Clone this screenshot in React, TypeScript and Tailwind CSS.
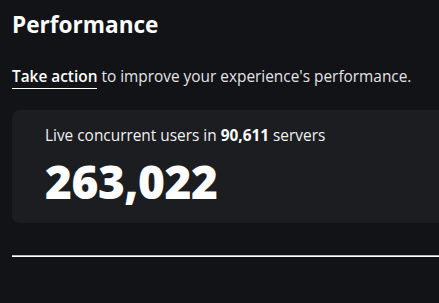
export default function App() {
  return (
    <div
      className="w-[439px] h-[303px] overflow-hidden bg-[#121317] text-white"
      style={{ fontFamily: '"Open Sans", "Noto Sans", sans-serif' }}
    >
      <div className="pl-3 pt-[10px] w-[480px]">
        <h1 className="text-[22.6px] leading-[30px] font-bold">Performance</h1>

        <p className="mt-[26px] text-[15.4px] leading-[22px] text-[#e4e4e6]">
          <span className="font-semibold text-white border-b-[1.5px] border-white pb-[1px]">Take action</span> to
          improve your experience's performance.
        </p>

        <div className="mt-[22px] w-[470px] h-[113px] rounded-lg bg-[#1c1d21] pl-[33px] pt-[15px]">
          <p className="text-[15.4px] leading-[22px] text-[#f0f0f2]">
            Live concurrent users in <span className="font-bold text-white">90,611</span> servers
          </p>
          <p className="mt-[8px] text-[46px] leading-[52px] font-extrabold tracking-[-0.5px]">263,022</p>
        </div>

        <div className="mt-[32px] h-[2px] w-[460px] bg-white border-t border-[#b8b8b8]" />
      </div>
    </div>
  );
}
